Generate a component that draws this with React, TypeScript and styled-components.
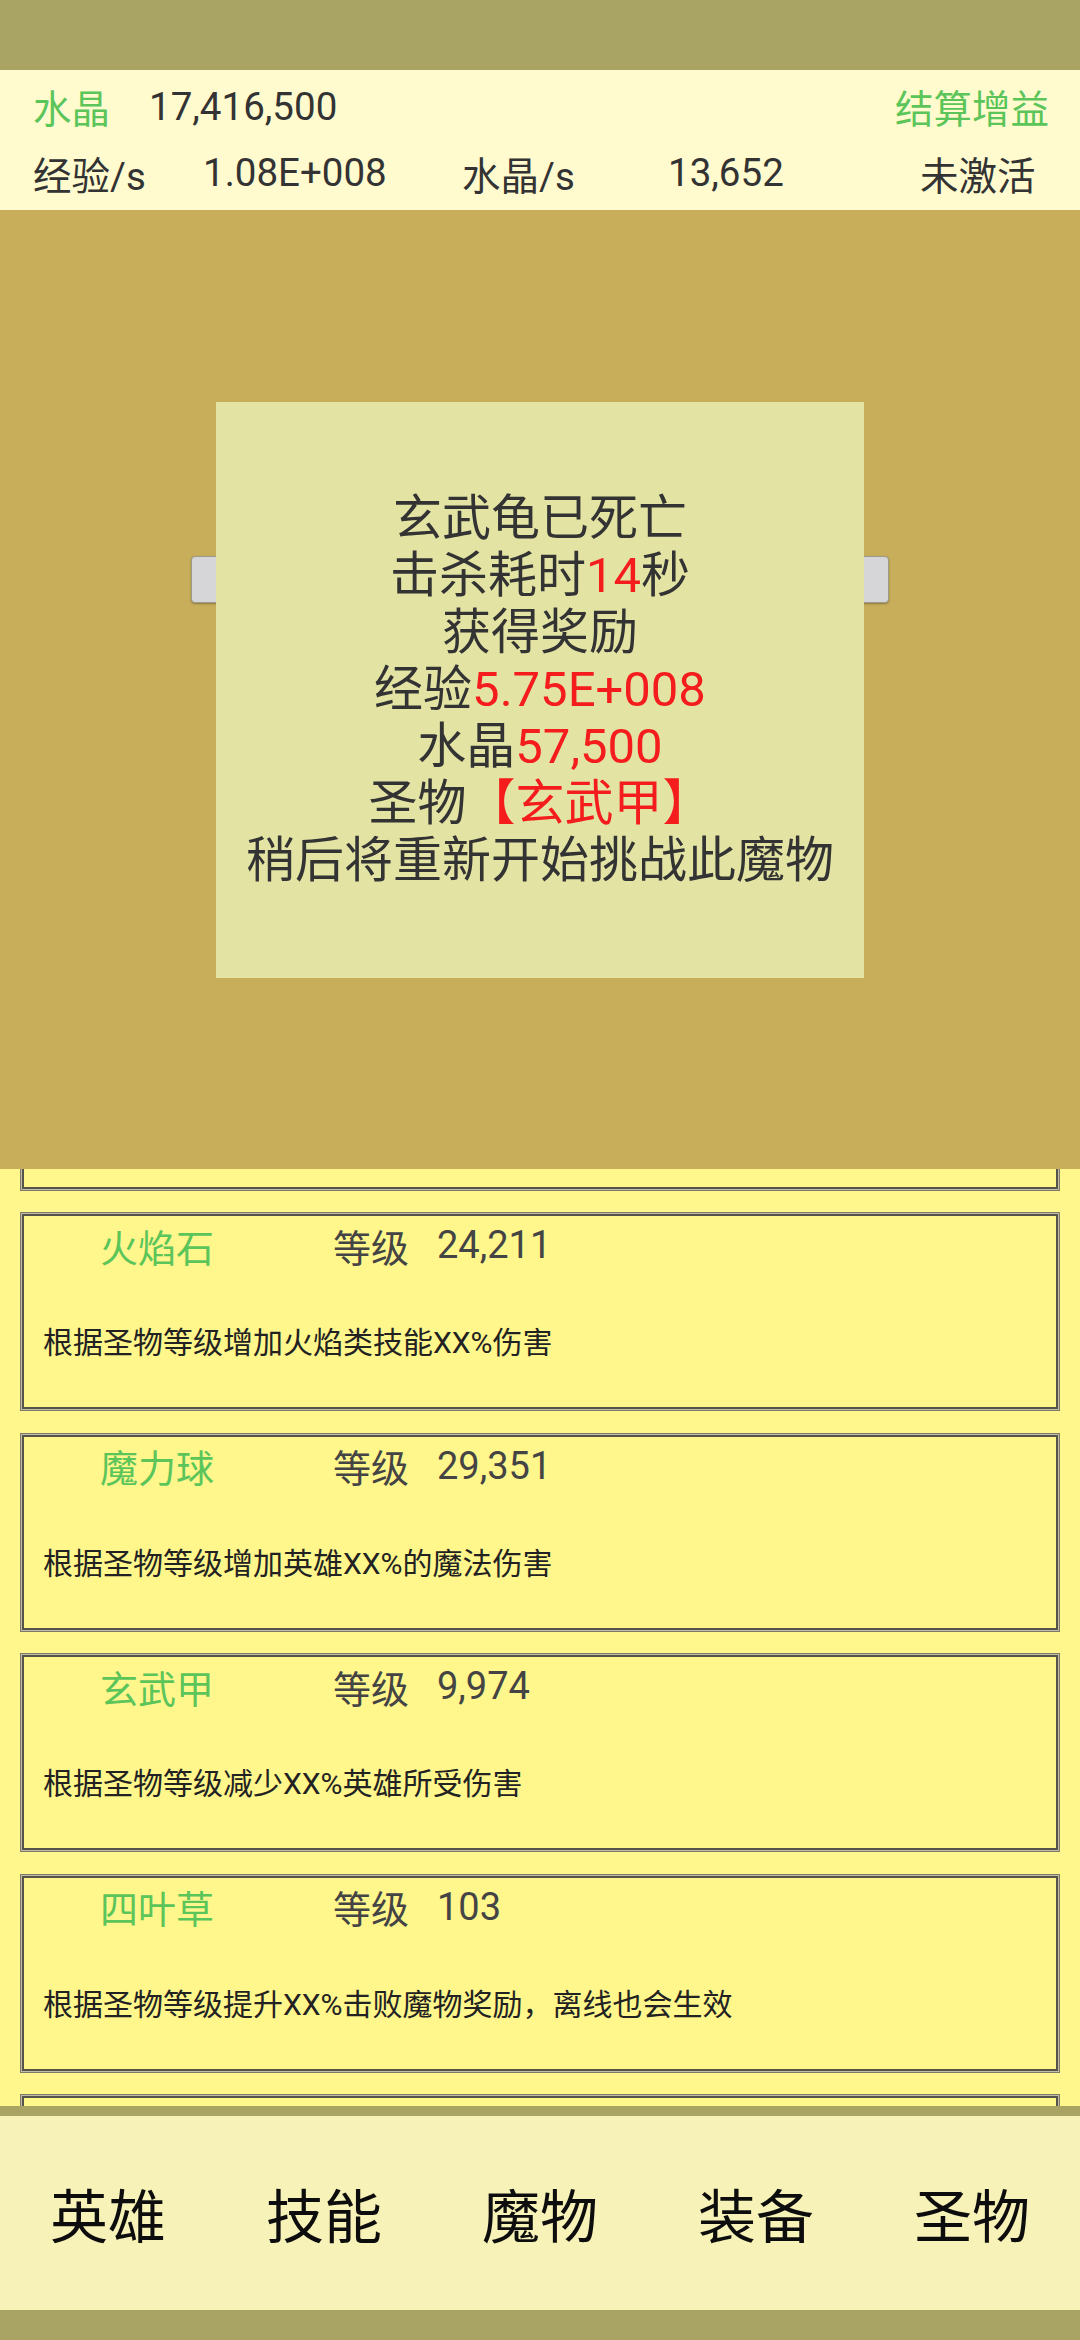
import React from "react";
import styled, { createGlobalStyle } from "styled-components";

const GlobalStyle = createGlobalStyle`
  html, body { margin: 0; padding: 0; }
  body {
    width: 1080px;
    height: 2340px;
    overflow: hidden;
    background: #fff68c;
    font-family: Roboto, "Noto Sans CJK SC", sans-serif;
  }
  #root { height: 2340px; }
`;

const Screen = styled.div`
  width: 1080px;
  height: 2340px;
  display: flex;
  flex-direction: column;
  background: #fff68c;
`;

const StatusBar = styled.div<{ $h: number }>`
  height: ${(p) => p.$h}px;
  flex: none;
  background: #a9a463;
`;

const Header = styled.div`
  height: 140px;
  flex: none;
  background: #fffbcf;
  display: flex;
  flex-direction: column;
  color: #333;
`;

const HeaderRow = styled.div`
  height: 70px;
  display: flex;
  align-items: center;
  padding: 2px 31px 0 33px;
  box-sizing: border-box;
  font-size: 38.5px;
`;

const StatsRow = styled.div`
  height: 70px;
  box-sizing: border-box;
  padding: 0 0 5px 33px;
  display: grid;
  grid-template-columns: 170px 259px 206px 252px auto;
  align-items: center;
  font-size: 38.5px;
`;

const Green = styled.span`
  color: #5cc55a;
`;

const Amount = styled.span`
  margin-left: 39px;
  flex: 1;
`;

const Content = styled.div`
  position: relative;
  flex: 1;
  overflow: hidden;
  background: #fff68c;
`;

const List = styled.div`
  display: flex;
  flex-direction: column;
  gap: 21.5px;
  padding: 120px 20px 0 20px;
`;

const Card = styled.div`
  height: 199px;
  flex: none;
  box-sizing: border-box;
  border: 1px solid #7d7a6c;
  box-shadow: inset 0 0 0 1px #c2bea6, inset 0 0 0 3px #55534a;
  padding: 3px 0 0 22px;
  display: flex;
  flex-direction: column;
`;

const CardTop = styled.div`
  height: 58px;
  display: grid;
  grid-template-columns: 233px 104px auto;
  align-items: center;
  padding-left: 57px;
  font-size: 38px;
  color: #444;
`;

const RelicName = styled.span`
  color: #5cc55a;
`;

const Desc = styled.div`
  margin-top: 49px;
  height: 40px;
  line-height: 40px;
  font-size: 30px;
  color: #222;
  white-space: nowrap;
`;

const Overlay = styled.div`
  position: absolute;
  top: 0;
  left: 0;
  right: 0;
  height: 959px;
  background: #c8ae5a;
  display: flex;
  align-items: center;
  justify-content: center;
`;

const BackButton = styled.div`
  position: absolute;
  left: 191px;
  top: 346px;
  width: 698px;
  height: 47px;
  box-sizing: border-box;
  background: #d6d6d8;
  border: 1px solid #9c9a8c;
  border-radius: 4px;
  box-shadow: 0 1px 2px rgba(0, 0, 0, 0.3);
`;

const Dialog = styled.div`
  position: relative;
  width: 648px;
  height: 576px;
  background: #e3e4a4;
  display: flex;
  flex-direction: column;
  align-items: center;
  justify-content: center;
  font-size: 49px;
  line-height: 57px;
  color: #333;
`;

const Line = styled.div`
  white-space: nowrap;
`;

const Red = styled.span`
  color: #f41c1c;
`;

const NavBar = styled.nav`
  height: 194px;
  flex: none;
  background: #f7f2b8;
  display: grid;
  grid-template-columns: repeat(5, 1fr);
  align-items: center;
`;

const NavItem = styled.div`
  text-align: center;
  font-size: 58px;
  color: #0d0d0d;
`;

type Relic = { name: string; level: string; desc: string };

const relics: Relic[] = [
  { name: "生命石", level: "18,204", desc: "根据圣物等级增加英雄XX%生命值" },
  { name: "力量戒", level: "21,530", desc: "根据圣物等级增加英雄XX%攻击力" },
  { name: "疾风羽", level: "15,877", desc: "根据圣物等级增加英雄XX%攻击速度" },
  { name: "寒冰石", level: "22,916", desc: "根据圣物等级增加冰霜类技能XX%伤害" },
  { name: "火焰石", level: "24,211", desc: "根据圣物等级增加火焰类技能XX%伤害" },
  { name: "魔力球", level: "29,351", desc: "根据圣物等级增加英雄XX%的魔法伤害" },
  { name: "玄武甲", level: "9,974", desc: "根据圣物等级减少XX%英雄所受伤害" },
  { name: "四叶草", level: "103", desc: "根据圣物等级提升XX%击败魔物奖励，离线也会生效" },
];

const tabs = ["英雄", "技能", "魔物", "装备", "圣物"];

export default function App() {
  return (
    <>
      <GlobalStyle />
      <Screen>
        <StatusBar $h={70} />
        <Header>
          <HeaderRow>
            <Green>水晶</Green>
            <Amount>17,416,500</Amount>
            <Green>结算增益</Green>
          </HeaderRow>
          <StatsRow>
            <span>经验/s</span>
            <span>1.08E+008</span>
            <span>水晶/s</span>
            <span>13,652</span>
            <span>未激活</span>
          </StatsRow>
        </Header>
        <Content>
          <List>
            {relics.map((r) => (
              <Card key={r.name}>
                <CardTop>
                  <RelicName>{r.name}</RelicName>
                  <span>等级</span>
                  <span>{r.level}</span>
                </CardTop>
                <Desc>{r.desc}</Desc>
              </Card>
            ))}
            <Card />
          </List>
          <Overlay>
            <BackButton />
            <Dialog>
              <Line>玄武龟已死亡</Line>
              <Line>
                击杀耗时<Red>14</Red>秒
              </Line>
              <Line>获得奖励</Line>
              <Line>
                经验<Red>5.75E+008</Red>
              </Line>
              <Line>
                水晶<Red>57,500</Red>
              </Line>
              <Line>
                圣物<Red>【玄武甲】</Red>
              </Line>
              <Line>稍后将重新开始挑战此魔物</Line>
            </Dialog>
          </Overlay>
        </Content>
        <StatusBar $h={10} />
        <NavBar>
          {tabs.map((t) => (
            <NavItem key={t}>{t}</NavItem>
          ))}
        </NavBar>
        <StatusBar $h={30} />
      </Screen>
    </>
  );
}
